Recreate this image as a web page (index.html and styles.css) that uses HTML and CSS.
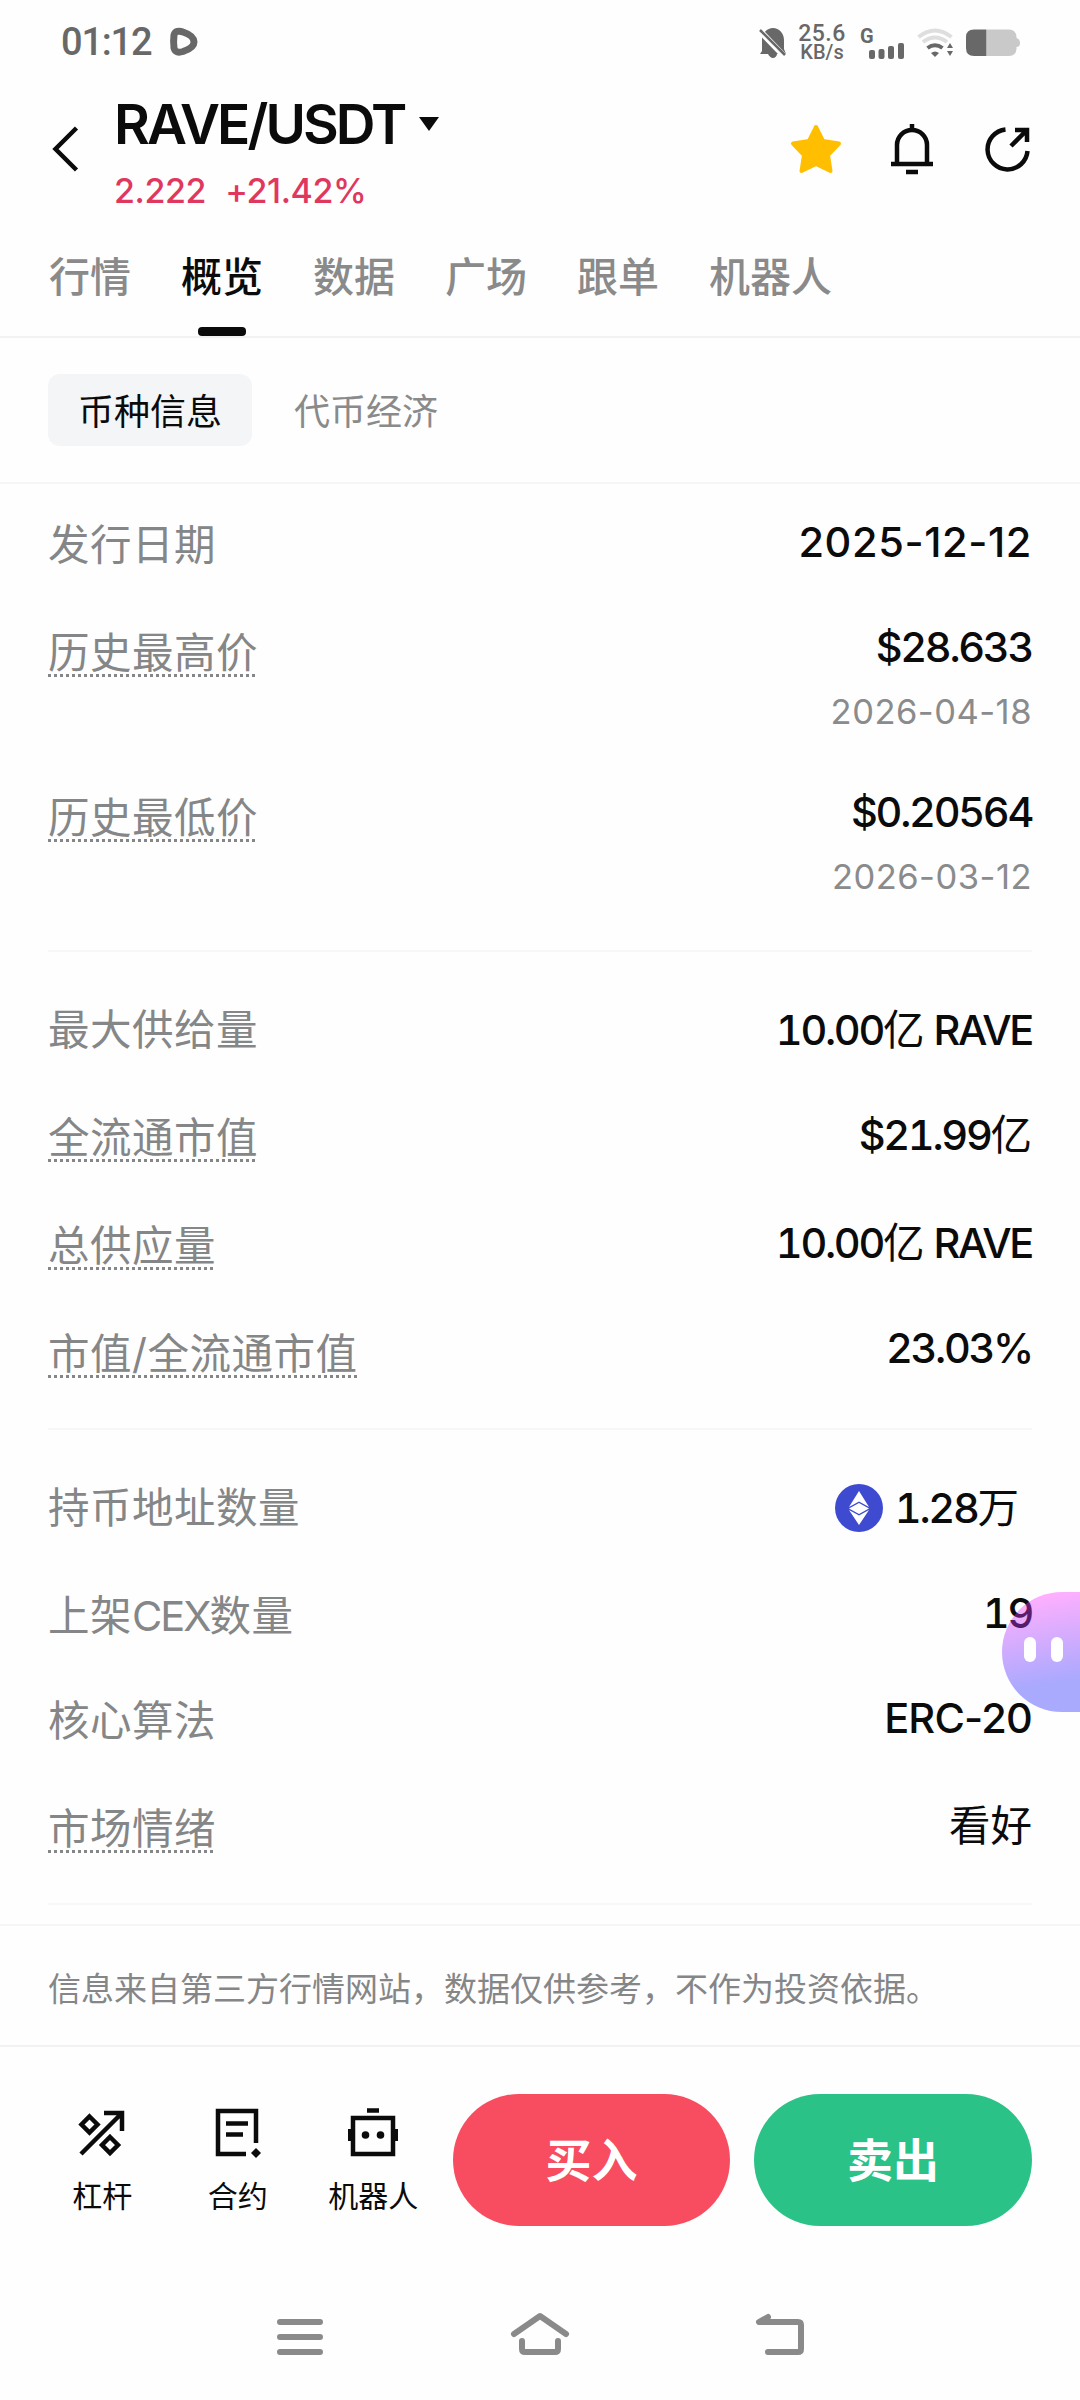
FILE: index.html
```html
<!DOCTYPE html>
<html lang="zh-CN">
<head>
    <meta charset="UTF-8">
    <meta name="viewport" content="width=device-width, initial-scale=1.0">
    <title>RAVE/USDT</title>
    <link rel="stylesheet" href="styles.css">
</head>
<body>
    <div class="screen">
        <!-- Status Bar -->
        <div class="status-bar">
            <div class="status-left">
                <span class="clock">01:12</span>
                <svg class="play-icon" width="28" height="28" viewBox="0 0 28 28">
                    <path d="M4 7C5 3 9 2.500 13 4C19 6 24 9.500 24 14C24 18 19 21.500 13 23.500C8 25 5 24 4 20C3.500 16 3.500 11 4 7Z" fill="none" stroke="#686868" stroke-width="7"/>
                </svg>
            </div>
            <div class="status-right">
                <svg class="mute-icon" width="28" height="32" viewBox="0 0 28 32">
                    <path d="M3 24V13C3 6 8 1 14 1S25 6 25 13V22L27 27H18C18 29 16 31 14 31S10 29 9 27H1Z" fill="#686868"/>
                    <path d="M-1 2L26 30" stroke="#fff" stroke-width="6"/>
                    <path d="M1 3L26 28" stroke="#686868" stroke-width="2.500"/>
                </svg>
                <div class="net-speed">
                    <span class="speed-num">25.6</span>
                    <span class="speed-unit">KB/s</span>
                </div>
                <svg class="signal-icon" width="46" height="32" viewBox="0 0 46 32">
                    <text x="0" y="16" class="signal-type">G</text>
                    <g fill="#686868">
                        <rect x="9" y="23" width="6" height="9" rx="2"/>
                        <rect x="18.500" y="22" width="6" height="10" rx="2"/>
                        <rect x="28" y="19" width="6" height="13" rx="2"/>
                        <rect x="38" y="16" width="6" height="16" rx="2"/>
                    </g>
                </svg>
                <svg class="wifi-icon" width="38" height="30" viewBox="0 0 38 30">
                    <g fill="none" stroke-width="4">
                        <path d="M1.500 9Q18 -4 34.500 9" stroke="#dedede"/>
                        <path d="M6 14Q18 5 30 14" stroke="#dedede"/>
                        <path d="M10.500 20Q18 14.500 25.500 20" stroke="#686868"/>
                    </g>
                    <path d="M14 25Q18 22 22 25L18 29Z" fill="#686868"/>
                    <path d="M30 20L33 15L36 20ZM30 23H36L33 28Z" fill="#686868"/>
                </svg>
                <svg width="55" height="28" viewBox="0 0 55 28">
                    <path d="M21 0.500H43Q50 0.500 50.500 8V9Q54 10 54 14T50.500 18V20Q50 27 43 27H21Z" fill="#c9c9c9"/>
                    <path d="M20.500 0.500V27H8Q0 27 0 19V8Q0 0.500 8 0.500Z" fill="#686868"/>
                </svg>
            </div>
        </div>

        <!-- Header -->
        <div class="header">
            <svg class="back-icon" width="26" height="46" viewBox="0 0 26 46">
                <path d="M24.500 2L3.500 23L24.500 44" fill="none" stroke="#0b0b0b" stroke-width="4.500"/>
            </svg>
            <div class="pair">
                <div class="pair-name">RAVE/USDT<span class="caret"></span></div>
                <div class="pair-price"><span>2.222</span><span>+21.42%</span></div>
            </div>
            <div class="header-icons">
                <svg width="52" height="50" viewBox="0 0 52 50">
                    <path d="M26 3L33 17L49 19.500L38 31L40.500 47L26 40L11.500 47L14 31L3 19.500L19 17Z" fill="#ffbf00" stroke="#ffbf00" stroke-width="4" stroke-linejoin="round"/>
                </svg>
                <svg class="bell-icon" width="42" height="50" viewBox="0 0 42 50">
                    <path d="M21 0V6M6 40V21A15 15 0 0 1 36 21V40M0 40H42M15 48H27" fill="none" stroke="#0b0b0b" stroke-width="4.500"/>
                </svg>
                <svg width="46" height="46" viewBox="0 0 46 46">
                    <path d="M20.500 3.500A20 20 0 1 0 42.500 25M26 20L42 4M30 4H42V16" fill="none" stroke="#0b0b0b" stroke-width="4.500"/>
                </svg>
            </div>
        </div>

        <!-- Main Tabs -->
        <div class="tabs">
            <a class="tab">行情</a>
            <a class="tab active">概览</a>
            <a class="tab">数据</a>
            <a class="tab">广场</a>
            <a class="tab">跟单</a>
            <a class="tab">机器人</a>
        </div>

        <!-- Sub Tabs -->
        <div class="sub-tabs">
            <a class="sub-tab selected">币种信息</a>
            <a class="sub-tab">代币经济</a>
        </div>

        <!-- Price History -->
        <div class="section price-history">
            <div class="row">
                <span class="label">发行日期</span>
                <span class="value date-value">2025-12-12</span>
            </div>
            <div class="row tall">
                <span class="label hint">历史最高价</span>
                <div class="value raised">
                    <div>$28.633</div>
                    <div class="sub-date">2026-04-18</div>
                </div>
            </div>
            <div class="row tall">
                <span class="label hint">历史最低价</span>
                <div class="value raised">
                    <div>$0.20564</div>
                    <div class="sub-date">2026-03-12</div>
                </div>
            </div>
        </div>

        <!-- Supply -->
        <div class="section supply">
            <div class="row">
                <span class="label">最大供给量</span>
                <span class="value lowered">10.00<span class="unit">亿</span> RAVE</span>
            </div>
            <div class="row">
                <span class="label hint">全流通市值</span>
                <span class="value">$21.99<span class="unit">亿</span></span>
            </div>
            <div class="row">
                <span class="label hint">总供应量</span>
                <span class="value">10.00<span class="unit">亿</span> RAVE</span>
            </div>
            <div class="row">
                <span class="label hint">市值/全流通市值</span>
                <span class="value raised">23.03%</span>
            </div>
        </div>

        <!-- Holders -->
        <div class="section holders">
            <div class="row">
                <span class="label">持币地址数量</span>
                <span class="value lowered chain">
                    <svg width="48" height="48" viewBox="0 0 48 48">
                        <circle cx="24" cy="24" r="24" fill="#3e4bd1"/>
                        <path d="M24 7L34 23L24 17.500L14 23Z" fill="#fff"/>
                        <path d="M24 19L34 24.500L24 30L14 24.500Z" fill="#fff"/>
                        <path d="M14 26L24 31.500L34 26L24 41Z" fill="#fff"/>
                    </svg>
                    <span>1.28<span class="unit">万</span></span>
                </span>
            </div>
            <div class="row short">
                <span class="label">上架<span class="latin">CEX</span>数量</span>
                <span class="value">19</span>
            </div>
            <div class="row">
                <span class="label">核心算法</span>
                <span class="value code-value">ERC-20</span>
            </div>
            <div class="row">
                <span class="label hint">市场情绪</span>
                <span class="value"><span class="unit">看好</span></span>
            </div>
        </div>

        <p class="disclaimer">信息来自第三方行情网站，数据仅供参考，不作为投资依据。</p>

        <!-- Bottom Actions -->
        <div class="actions">
            <div class="action">
                <svg width="50" height="50" viewBox="0 0 50 50">
                    <path d="M4 46L45 5M27 5H45V23" fill="none" stroke="#0b0b0b" stroke-width="4.500"/>
                    <path d="M12.500 8.500L20.500 16.500L12.500 24.500L4.500 16.500ZM33 29L41 37L33 45L25 37Z" fill="none" stroke="#0b0b0b" stroke-width="4.500"/>
                </svg>
                <span>杠杆</span>
            </div>
            <div class="action">
                <svg width="50" height="50" viewBox="0 0 50 50">
                    <path d="M33 46H5V3H43V35M13 15.500H35M13 26.500H30" fill="none" stroke="#0b0b0b" stroke-width="4.500"/>
                    <path d="M43 40L48 45L43 50L38 45Z" fill="#0b0b0b"/>
                </svg>
                <span>合约</span>
            </div>
            <div class="action">
                <svg width="50" height="50" viewBox="0 0 50 50">
                    <path d="M5 10H45V46H5ZM19 2.500H31" fill="none" stroke="#0b0b0b" stroke-width="4.500"/>
                    <path d="M0 21H5V33H0ZM45 21H50V33H45Z" fill="#0b0b0b"/>
                    <circle cx="17.500" cy="27" r="3.800" fill="#0b0b0b"/>
                    <circle cx="32.500" cy="27" r="3.800" fill="#0b0b0b"/>
                </svg>
                <span>机器人</span>
            </div>
            <button class="trade-btn buy">买入</button>
            <button class="trade-btn sell">卖出</button>
        </div>

        <!-- System Navigation -->
        <div class="system-nav">
            <svg width="60" height="48" viewBox="0 0 60 48">
                <path d="M10 8H50M10 23H50M10 38H50" class="nav-line"/>
            </svg>
            <svg width="60" height="48" viewBox="0 0 60 48">
                <path d="M4 20L30 2L56 20M12 27V35Q12 38 15 38H45Q48 38 48 35V27" class="nav-line"/>
            </svg>
            <svg width="60" height="48" viewBox="0 0 60 48">
                <path d="M18 3L9 8H48Q51 8 51 11V35Q51 38 48 38H18" class="nav-line"/>
            </svg>
        </div>

        <!-- Floating Assistant -->
        <div class="assistant">
            <span class="eye"></span>
            <span class="eye"></span>
        </div>
    </div>
</body>
</html>
```
FILE: styles.css
```css
/* General Styles */
* {
    box-sizing: border-box;
}

body {
    margin: 0;
    font-family: Inter, "Noto Sans CJK SC", sans-serif;
    background-color: #fefefe;
    color: #0b0b0b;
}

svg {
    display: block;
    flex-shrink: 0;
    overflow: visible;
}

.screen {
    position: relative;
    display: flex;
    flex-direction: column;
    width: 1080px;
    height: 2400px;
    overflow: hidden;
}

/* Status Bar */
.status-bar {
    display: flex;
    justify-content: space-between;
    align-items: center;
    height: 84px;
    padding: 0 59px 0 61px;
    color: #686868;
}

.status-left, .status-right {
    display: flex;
    align-items: center;
}

.status-right {
    padding-top: 2px;
}

.clock {
    font-family: Roboto, sans-serif;
    font-size: 38px;
    font-weight: 500;
    letter-spacing: -1.2px;
    width: 109px;
}

.mute-icon {
    margin-right: 11px;
}

.net-speed {
    display: flex;
    flex-direction: column;
    align-items: center;
    width: 48px;
    margin-right: 14px;
    font-family: Roboto, sans-serif;
    font-weight: 500;
}

.speed-num {
    font-size: 23px;
    line-height: 19px;
    letter-spacing: 0.500px;
}

.speed-unit {
    font-size: 20px;
    line-height: 19px;
}

.signal-type {
    font-family: Roboto, sans-serif;
    font-size: 20px;
    font-weight: 700;
    fill: #686868;
}

.wifi-icon {
    margin-left: 11px;
    margin-right: 11px;
}

/* Header */
.header {
    display: flex;
    align-items: center;
    height: 130px;
    padding: 0 49px 0 52px;
}

.pair {
    margin: 8px 0 0 36px;
}

.pair-name {
    display: flex;
    align-items: center;
    font-size: 55px;
    font-weight: 600;
    line-height: 56px;
    letter-spacing: -2.900px;
}

.caret {
    margin-left: 15px;
    border-left: 10px solid transparent;
    border-right: 10px solid transparent;
    border-top: 14px solid #0b0b0b;
}

.pair-price {
    display: flex;
    gap: 19px;
    margin-top: 19px;
    font-size: 34px;
    font-weight: 500;
    line-height: 40px;
    letter-spacing: -0.400px;
    color: #e0375f;
}

.header-icons {
    display: flex;
    align-items: center;
    gap: 49px;
    margin-left: auto;
}

.bell-icon {
    margin-right: 3px;
}

/* Main Tabs */
.tabs {
    display: flex;
    gap: 50px;
    height: 124px;
    padding: 33px 49px 0;
    border-bottom: 2px solid #f1f2f3;
}

.tab {
    position: relative;
    font-size: 41px;
    font-weight: 500;
    line-height: 60px;
    color: #8a8a8a;
}

.tab.active {
    color: #0b0b0b;
}

.tab.active::after {
    content: "";
    position: absolute;
    bottom: 0;
    left: 17px;
    width: 48px;
    height: 9px;
    border-radius: 4px;
    background-color: #0b0b0b;
}

/* Sub Tabs */
.sub-tabs {
    display: flex;
    gap: 12px;
    height: 146px;
    padding: 36px 48px;
    border-bottom: 2px solid #f5f6f6;
}

.sub-tab {
    height: 72px;
    padding: 0 30px;
    border-radius: 12px;
    font-size: 36px;
    line-height: 76px;
    color: #8a8a8a;
}

.sub-tab.selected {
    background-color: #f3f5f7;
    color: #0b0b0b;
}

/* Info Sections */
.section {
    margin: 0 48px;
    border-bottom: 2px solid #f6f7f7;
}

.price-history {
    height: 468px;
    padding-top: 30px;
}

.supply {
    height: 478px;
    padding-top: 47px;
}

.holders {
    height: 475px;
    padding-top: 47px;
}

.row {
    display: flex;
    justify-content: space-between;
    align-items: flex-start;
    height: 108px;
    font-size: 41.500px;
    line-height: 60px;
}

.row.tall {
    height: 164.500px;
}

.row.short {
    height: 105px;
}

.label {
    line-height: 63px;
    letter-spacing: 0.500px;
    color: #858687;
}

.latin {
    letter-spacing: -2px;
}

.hint {
    height: 55px;
    background: repeating-linear-gradient(to right, #858687 0 3px, transparent 3px 6px) left bottom / 100% 3px no-repeat;
}

.value {
    margin-top: -2px;
    font-weight: 500;
    font-variant-numeric: tabular-nums;
    letter-spacing: -2.300px;
    text-align: right;
}

.value.raised {
    margin-top: -5px;
}

.value.lowered {
    margin-top: 1px;
}

.date-value {
    font-variant-numeric: normal;
    letter-spacing: 0.600px;
}

.code-value {
    font-variant-numeric: normal;
    letter-spacing: -0.800px;
}

.unit {
    font-weight: 400;
    letter-spacing: 0;
}

.sub-date {
    margin-top: 5px;
    font-size: 34.500px;
    font-weight: 400;
    font-variant-numeric: normal;
    letter-spacing: 0.500px;
    color: #8a8b8c;
}

.chain {
    display: flex;
    align-items: center;
    gap: 12px;
    margin-right: 13px;
}

/* Disclaimer */
.disclaimer {
    height: 123px;
    margin: 19px 0 0;
    padding: 0 48px;
    border-top: 2px solid #f5f6f6;
    border-bottom: 2px solid #f1f2f3;
    font-size: 33px;
    line-height: 127px;
    color: #858687;
}

/* Bottom Actions */
.actions {
    display: flex;
    height: 228px;
    padding: 47px 48px 0 34.500px;
}

.action {
    display: flex;
    flex-direction: column;
    align-items: center;
    width: 135.500px;
    padding-top: 14px;
    font-size: 30px;
    line-height: 40px;
}

.action svg {
    margin-bottom: 18px;
}

.trade-btn {
    width: 277px;
    height: 132px;
    padding: 0 0 7px;
    border: none;
    border-radius: 66px;
    font-family: inherit;
    font-size: 46px;
    font-weight: 700;
    color: #fff;
}

.buy {
    margin-left: 12px;
    background-color: #f84c60;
}

.sell {
    width: 278px;
    margin-left: 24px;
    background-color: #2bc287;
}

/* System Navigation */
.system-nav {
    display: flex;
    justify-content: center;
    gap: 180px;
    padding-top: 39px;
}

.nav-line {
    fill: none;
    stroke: #8a8a8a;
    stroke-width: 6;
    stroke-linecap: round;
    stroke-linejoin: round;
}

/* Floating Assistant */
.assistant {
    position: absolute;
    top: 1592px;
    right: 0;
    display: flex;
    gap: 15px;
    width: 78px;
    height: 120px;
    padding: 45px 0 0 22px;
    border-radius: 60px 0 0 60px;
    background: linear-gradient(170deg, rgba(255, 57, 255, 0.4) 8%, rgba(42, 42, 255, 0.4) 75%);
}

.eye {
    width: 12px;
    height: 25px;
    border-radius: 6px;
    background-color: #fff;
}
```
